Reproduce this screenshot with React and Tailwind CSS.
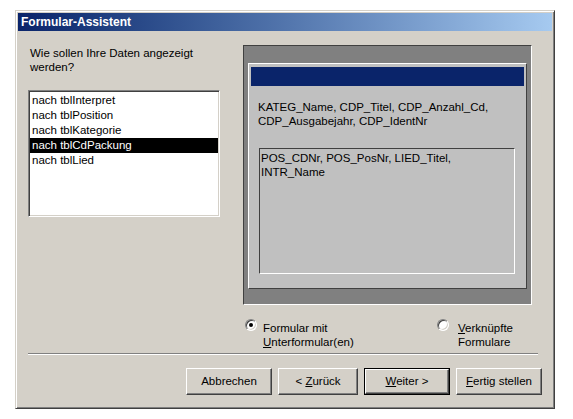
import React from 'react';

const tables = ['nach tblInterpret', 'nach tblPosition', 'nach tblKategorie', 'nach tblCdPackung', 'nach tblLied'];
const selectedTable = 3;

const Radio = ({ checked }) => (
  <div className="w-[12px] h-[12px] rounded-full bg-white border border-t-[#808080] border-l-[#808080] border-r-white border-b-white shadow-[inset_1px_1px_#404040,inset_-1px_-1px_#d4d0c8] flex items-center justify-center shrink-0">
    {checked && <div className="w-[4px] h-[4px] rounded-full bg-black" />}
  </div>
);

const Button = ({ width, isDefault, children }) => (
  <div
    className={`h-[27px] ${width} flex items-center justify-center text-[11.5px] text-black ${
      isDefault ? 'border border-black' : ''
    }`}
  >
    <div className="w-full h-full flex items-center justify-center border border-t-white border-l-white border-r-[#404040] border-b-[#404040] shadow-[inset_-1px_-1px_#808080]">
      {children}
    </div>
  </div>
);

export default function App() {
  return (
    <div className="w-[573px] h-[419px] bg-white pt-[10px] pl-[15px]" style={{ fontFamily: '"Liberation Sans", Arial, sans-serif' }}>
      <div className="w-[540px] h-[399px] bg-[#d4d0c8] border border-t-[#d4d0c8] border-l-[#d4d0c8] border-r-[#404040] border-b-[#404040] shadow-[inset_1px_1px_#ffffff,inset_-1px_-1px_#808080] p-[2px] flex flex-col">
        {/* Title bar */}
        <div className="h-[18px] bg-gradient-to-r from-[#0a246a] to-[#a6caf0] flex items-center pl-[3px] text-white font-bold text-[12px] leading-none">
          Formular-Assistent
        </div>

        <div className="flex pl-[10px] pt-[14px]">
          {/* Left: choice of table */}
          <div className="w-[192px] flex flex-col">
            <p className="mt-[1px] ml-[2px] text-[11.5px] leading-[14px] text-black">
              Wie sollen Ihre Daten angezeigt
              <br />
              werden?
            </p>
            <div className="mt-[16px] h-[127px] bg-white border border-t-[#808080] border-l-[#808080] border-r-white border-b-white shadow-[inset_1px_1px_#404040,inset_-1px_-1px_#d4d0c8] p-[1px] pt-[2px]">
              {tables.map((t, idx) => (
                <div
                  key={t}
                  className={`h-[15px] leading-[15px] pl-[2px] text-[11.5px] whitespace-nowrap ${
                    idx === selectedTable ? 'bg-black text-white' : 'text-black'
                  }`}
                >
                  {t}
                </div>
              ))}
            </div>
          </div>

          {/* Right: form preview */}
          <div className="ml-[23px] flex flex-col">
            <div className="w-[289px] h-[260px] bg-[#808080] border border-t-[#404040] border-l-[#404040] border-r-white border-b-white pl-[4px] pr-[4px] pt-[17px] pb-[15px]">
              <div className="w-full h-full bg-[#c0c0c0] border border-t-white border-l-white border-r-[#404040] border-b-[#404040] px-[2px] pt-[3px] flex flex-col">
                <div className="h-[19px] bg-[#0a246a]" />
                <p className="mt-[14px] pl-[7px] text-[11.5px] leading-[14px] text-black">
                  KATEG_Name, CDP_Titel, CDP_Anzahl_Cd,
                  <br />
                  CDP_Ausgabejahr, CDP_IdentNr
                </p>
                <div className="mt-[20px] ml-[8px] w-[256px] h-[126px] border border-t-[#404040] border-l-[#404040] border-r-white border-b-white pl-[1px] pt-[2px]">
                  <p className="text-[11.5px] leading-[14px] text-black">
                    POS_CDNr, POS_PosNr, LIED_Titel,
                    <br />
                    INTR_Name
                  </p>
                </div>
              </div>
            </div>

            {/* Form type options */}
            <div className="mt-[14px] flex items-start">
              <div className="ml-[2px] flex items-start w-[192px]">
                <Radio checked />
                <p className="ml-[6px] mt-[2px] text-[11.5px] leading-[14px] text-black">
                  Formular mit
                  <br />
                  <u className="underline-offset-1">U</u>nterformular(en)
                </p>
              </div>
              <div className="flex items-start">
                <Radio />
                <p className="ml-[9px] mt-[2px] text-[11.5px] leading-[14px] text-black">
                  <u className="underline-offset-1">V</u>erknüpfte
                  <br />
                  Formulare
                </p>
              </div>
            </div>
          </div>
        </div>

        {/* Etched separator */}
        <div className="mt-[4px] ml-[10px] w-[510px] h-[2px] border-t border-t-[#808080] border-b border-b-white" />

        {/* Wizard buttons */}
        <div className="mt-[13px] pr-[10px] flex justify-end gap-[6px]">
          <Button width="w-[86px]">Abbrechen</Button>
          <Button width="w-[80px]">
            <span>
              &lt; <u className="underline-offset-1">Z</u>urück
            </span>
          </Button>
          <Button width="w-[86px]" isDefault>
            <span>
              <u className="underline-offset-1">W</u>eiter &gt;
            </span>
          </Button>
          <Button width="w-[86px]">
            <span>
              <u className="underline-offset-1">F</u>ertig stellen
            </span>
          </Button>
        </div>
      </div>
    </div>
  );
}
